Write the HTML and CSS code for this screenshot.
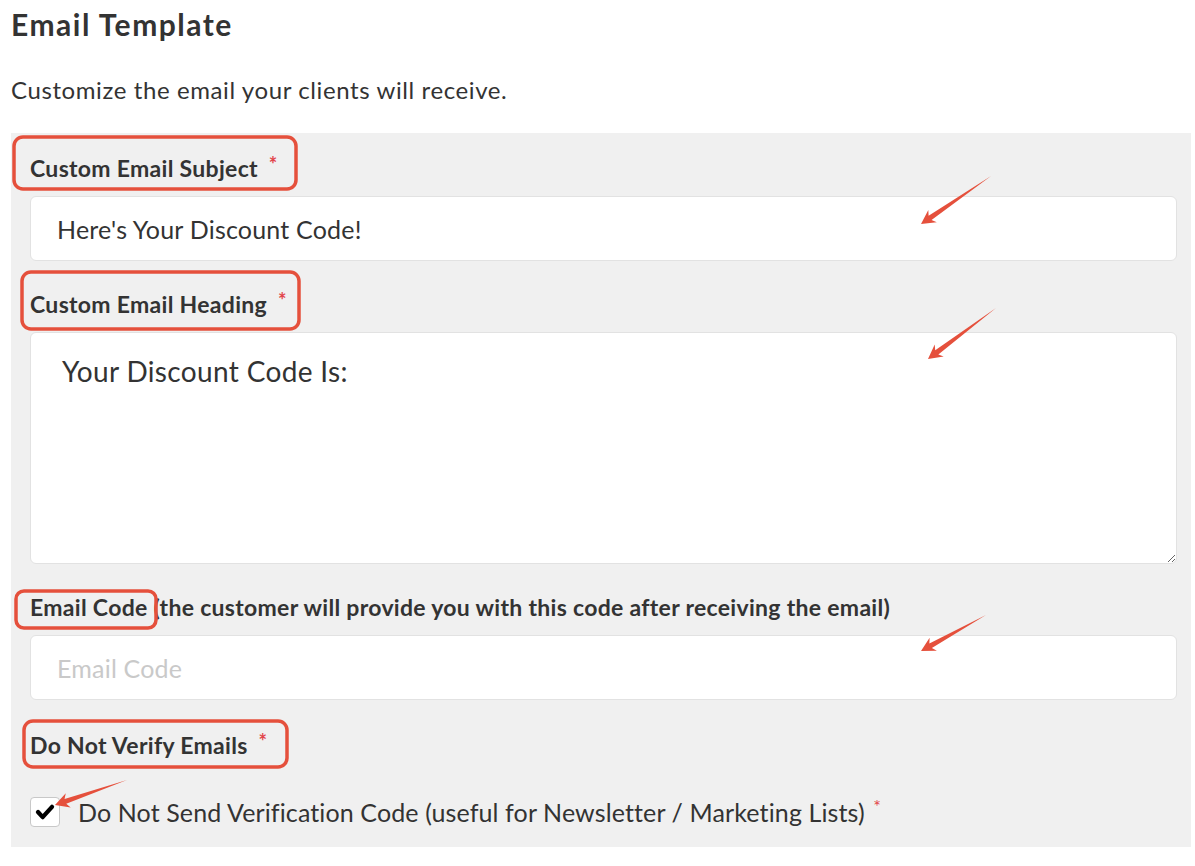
FILE: index.html
```html
<!DOCTYPE html>
<html lang="en">
<head>
<meta charset="utf-8">
<title>Email Template</title>
<link rel="stylesheet" href="styles.css">
</head>
<body>
<div class="page">
  <h1 class="title">Email Template</h1>
  <p class="subtitle">Customize the email your clients will receive.</p>

  <div class="panel">
    <div class="group">
      <label class="label">Custom Email Subject <span class="req">*</span></label>
      <input class="field" type="text" value="Here's Your Discount Code!">
    </div>
    <div class="group">
      <label class="label">Custom Email Heading <span class="req">*</span></label>
      <textarea class="area">Your Discount Code Is:</textarea>
    </div>
    <div class="group">
      <label class="label">Email Code (the customer will provide you with this code after receiving the email)</label>
      <input class="field" type="text" placeholder="Email Code">
    </div>
    <div class="group group-last">
      <label class="label">Do Not Verify Emails <span class="req">*</span></label>
      <div class="check-row">
        <span class="checkbox">
          <svg width="30" height="30" viewBox="0 0 30 30"><polyline points="7.5,15 12.5,20.5 22.5,9.5" fill="none" stroke="#000" stroke-width="4.6" stroke-linecap="round" stroke-linejoin="round"/></svg>
        </span>
        <span class="check-text">Do Not Send Verification Code (useful for Newsletter / Marketing Lists) <span class="req req-sm">*</span></span>
      </div>
    </div>
  </div>
</div>

<svg class="annot" width="1195" height="866" viewBox="0 0 1195 866">
  <g fill="none" stroke="#e5503c" stroke-width="3.5">
    <rect x="14" y="137" width="282" height="52" rx="9"/>
    <rect x="22" y="272" width="277" height="57" rx="9"/>
    <rect x="16" y="591" width="140" height="37" rx="8"/>
    <rect x="24" y="721" width="263" height="46" rx="9"/>
  </g>
  <g fill="#e5503c">
    <polygon transform="translate(921,224) rotate(-34.4)" points="0,0 14,-7.5 11,-2.6 84.9,0 11,2.6 14,7.5"/>
    <polygon transform="translate(928,359) rotate(-36.9)" points="0,0 14,-7.5 11,-2.6 85,0 11,2.6 14,7.5"/>
    <polygon transform="translate(921,651) rotate(-29)" points="0,0 14,-7.5 11,-2.6 74.3,0 11,2.6 14,7.5"/>
    <polygon transform="translate(55,805) rotate(-19.1)" points="0,0 14,-7.5 11,-2.6 76.2,0 11,2.6 14,7.5"/>
  </g>
</svg>
</body>
</html>
```

FILE: styles.css
```css
html, body {
  margin: 0;
  padding: 0;
  background: #ffffff;
}

body {
  font-family: Lato, "Open Sans", "Liberation Sans", sans-serif;
  color: #333333;
  position: relative;
  width: 1195px;
  height: 866px;
  overflow: hidden;
}

.page {
  padding: 0 4px 0 11px;
}

.title {
  margin: 0;
  padding-top: 7px;
  font-size: 30px;
  font-weight: 700;
  line-height: 35px;
  letter-spacing: 1.5px;
  color: #333333;
}

.subtitle {
  margin: 34px 0 0 0;
  font-size: 24px;
  font-weight: 400;
  line-height: 28px;
  letter-spacing: 0.6px;
  color: #333333;
}

.panel {
  margin-top: 29px;
  width: 1180px;
  box-sizing: border-box;
  background: #f0f0f0;
  padding: 21px 14px 20px 19px;
  display: flex;
  flex-direction: column;
  gap: 29px;
}

.group {
  display: flex;
  flex-direction: column;
  gap: 14px;
}

.group-last {
  gap: 38px;
}

.group-last .label {
  margin-top: 2px;
}

.label {
  display: block;
  font-size: 23px;
  font-weight: 700;
  line-height: 28px;
  letter-spacing: 0.3px;
  color: #333333;
}

.req {
  color: #e2454a;
  font-size: 20px;
  font-weight: 700;
  vertical-align: 5px;
  line-height: 14px;
  margin-left: 5px;
}

.req-sm {
  font-size: 18px;
  font-weight: 400;
  vertical-align: 9px;
  margin-left: 2px;
}

.field {
  display: block;
  box-sizing: border-box;
  width: 100%;
  height: 65px;
  border: 1px solid #e2e2e2;
  border-radius: 6px;
  background: #ffffff;
  padding: 0 26px;
  font-family: Lato, "Open Sans", "Liberation Sans", sans-serif;
  font-size: 25px;
  letter-spacing: 0.2px;
  color: #333333;
  outline: none;
}

.field::placeholder {
  color: #c9c9c9;
}

.area {
  display: block;
  box-sizing: border-box;
  width: 100%;
  height: 232px;
  border: 1px solid #e2e2e2;
  border-radius: 6px;
  background: #ffffff;
  padding: 22px 31px;
  font-family: Lato, "Open Sans", "Liberation Sans", sans-serif;
  font-size: 28px;
  line-height: 1.2;
  letter-spacing: 0.35px;
  color: #333333;
  resize: vertical;
  outline: none;
}

.check-row {
  display: flex;
  align-items: center;
  gap: 18px;
}

.checkbox {
  width: 30px;
  height: 30px;
  box-sizing: border-box;
  border: 1px solid #c8c8c8;
  border-radius: 4px;
  background: #ffffff;
  display: flex;
  align-items: center;
  justify-content: center;
  flex: none;
}

.checkbox svg {
  display: block;
}

.check-text {
  font-size: 25px;
  line-height: 30px;
  letter-spacing: 0.12px;
  color: #333333;
}

.annot {
  position: absolute;
  left: 0;
  top: 0;
  pointer-events: none;
}
```
